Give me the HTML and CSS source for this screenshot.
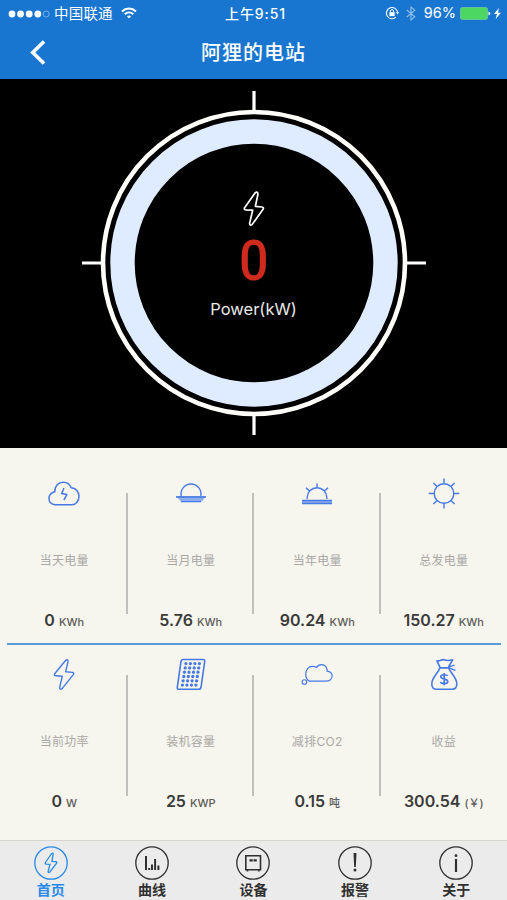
FILE: index.html
```html
<!DOCTYPE html>
<html lang="zh-CN">
<head>
<meta charset="utf-8">
<title>阿狸的电站</title>
<link rel="stylesheet" href="styles.css">
</head>
<body>
<header class="top">
  <div class="status">
    <div class="status-left">
      <svg width="42" height="10" viewBox="0 0 42 10" fill="#fff"><circle cx="4" cy="5" r="3.4"/><circle cx="12.6" cy="5" r="3.4"/><circle cx="21.2" cy="5" r="3.4"/><circle cx="29.8" cy="5" r="3.4"/><circle cx="38.2" cy="5" r="3" fill="none" stroke="#8dbcec" stroke-width=".8"/></svg>
      <span class="carrier">中国联通</span>
      <svg class="wifi" width="16" height="12" viewBox="0 0 16 12" fill="none" stroke="#fff" stroke-width="2"><path d="M1 4.4a10.2 10.2 0 0 1 14 0M3.7 7.2a6.4 6.4 0 0 1 8.6 0"/><path d="M5.9 9.3a3.2 3.2 0 0 1 4.2 0L8 11.6z" fill="#fff" stroke="none"/></svg>
    </div>
    <div class="clock">上午9:51</div>
    <div class="status-right">
      <svg width="14" height="14" viewBox="0 0 14 14" fill="none" stroke="#fff"><path d="M10.9 11.2A5.6 5.6 0 1 1 12.6 6.5" stroke-width="1.1"/><path d="M10.9 6.2h3.1l-1.5 2.2z" fill="#fff" stroke="none"/><rect x="4.4" y="6.2" width="5.2" height="3.9" fill="#fff" stroke="none"/><path d="M5.4 6.4V5.2a1.6 1.6 0 0 1 3.2 0v1.2"/></svg>
      <svg class="bt" width="10" height="15" viewBox="0 0 10 15" fill="none" stroke="#8fbdeb" stroke-width="1.1"><path d="M.8 4l8 6.8L5 14V1l3.8 3.2-8 6.8"/></svg>
      <span class="percent">96%</span>
      <svg class="battery" width="31" height="13" viewBox="0 0 31 13"><rect x=".5" y=".5" width="27" height="12" rx="1.8" fill="#4cd763" stroke="#79cf9a" stroke-width=".7"/><path d="M28.4 4.6q2 .4 2 2t-2 2z" fill="#d8eaf9"/></svg>
      <svg class="charge" width="7" height="11" viewBox="0 0 7 11" fill="#fff"><path d="M4.9 0L0 6h2.9L1.7 11 7 4.7H4z"/></svg>
    </div>
  </div>
  <div class="nav">
    <svg class="back" width="16" height="25" viewBox="0 0 16 25" fill="none" stroke="#fff" stroke-width="3.6"><path d="M14 1.5L2.8 12.5 14 23.5"/></svg>
    <h1>阿狸的电站</h1>
  </div>
</header>

<section class="gauge">
  <svg class="dial" width="346" height="346" viewBox="-173 -173 346 346" fill="none">
    <circle r="151" stroke="#fffefa" stroke-width="4.6"/>
    <circle r="131.5" stroke="#dfebfe" stroke-width="24.4"/>
    <path d="M0-172v20M0 172v-20M-172 0h20M172 0h-20" stroke="#fff" stroke-width="3.2"/>
  </svg>
  <div class="reading">
    <svg width="22" height="36" viewBox="0 0 22 36" fill="none" stroke="#fff" stroke-width="1.7" stroke-linejoin="round"><path d="M12.2 1.8L1.6 16.7Q.6 18.6 2.8 18.8L9.7 19.2 6.6 32.4Q6.6 35.2 9.1 33.6L20.2 18.1Q21 16.3 19 16L12.4 15.3 14.9 3.5Q14.9 0 12.2 1.8z"/></svg>
    <div class="power">0</div>
    <div class="power-unit">Power(kW)</div>
  </div>
</section>

<main class="stats">
  <div class="row">
    <div class="cell">
      <svg class="icon" viewBox="0 0 32 32"><path stroke-width="1.5" d="M7.2 27.7C3.4 27.2 1 24.6 1 21.4 1 18 3.5 15.7 6.8 14.8 6.8 9 10.3 5.2 15.3 5.2c3.8 0 6.6 2 7.8 5.6C28 11 31 14.8 31 19.3c0 4.7-3 8.4-7 8.4z"/><path stroke-width="1.5" d="M16 11l-2.4 5.6 5.2 1-2.9 5.6"/></svg>
      <div class="label">当天电量</div>
      <div class="value">0 <small>KWh</small></div>
    </div>
    <div class="cell">
      <svg class="icon" viewBox="0 0 32 32"><path d="M6.2 19a10 10 0 1 1 19.6 0"/><path fill="#8caeed" stroke="none" d="M1 19h30l-4 5.5H6z"/><path d="M1 20h30M6 24.6h20"/></svg>
      <div class="label">当月电量</div>
      <div class="value">5.76 <small>KWh</small></div>
    </div>
    <div class="cell">
      <svg class="icon" viewBox="0 0 32 32"><path d="M6.2 22v-1.5a9.8 9.8 0 0 1 19.6 0V22M16 11V6.5M8.5 14L5 10.7M23.5 14l3.5-3.3"/><path stroke="#8caeed" stroke-width="4" d="M1 25h30"/><path d="M1 23.5h30M1 26.5h30"/></svg>
      <div class="label">当年电量</div>
      <div class="value">90.24 <small>KWh</small></div>
    </div>
    <div class="cell">
      <svg class="icon" viewBox="0 0 32 32"><circle cx="16" cy="16.5" r="9.8"/><path d="M16 6.7v-5.2M16 31.5v-5.2M.8 16.500H6.2M25.8 16.5h5.4M9 9.5L5.4 5.9M23 9.5l3.6-3.6M9 23.5l-3.6 3.6M23 23.5l3.6 3.6"/></svg>
      <div class="label">总发电量</div>
      <div class="value">150.27 <small>KWh</small></div>
    </div>
  </div>
  <div class="divider"></div>
  <div class="row">
    <div class="cell">
      <svg class="icon" viewBox="0 0 32 32"><path d="M17.700 2.300L6.700 15.700Q5.600 17.500 7.800 17.700L14.300 18.200 11.700 29.400Q11.700 32 14.100 30.600L25.500 16.400Q26.400 14.700 24.300 14.400L17.700 13.700 20 3.700Q20.300.7 17.700 2.300z"/></svg>
      <div class="label">当前功率</div>
      <div class="value">0 <small>W</small></div>
    </div>
    <div class="cell">
      <svg class="icon" viewBox="0 0 32 32"><path stroke-width="1.6" d="M8.200 1.500H28Q30 1.500 29.700 3.500L26 29.500Q25.700 31.300 23.800 31.300H4Q2 31.300 2.300 29.300L6 3.300Q6.300 1.500 8.200 1.500z"/><path stroke-width="3.300" stroke-linecap="round" stroke-dasharray="0 4.500" d="M10.900 5.600h13.900M10.200 9.900h13.900M9.500 14.200h13.900M8.800 18.500h13.900M8.100 22.800h13.900M7.400 27.100h13.900"/></svg>
      <div class="label">装机容量</div>
      <div class="value">25 <small>KWP</small></div>
    </div>
    <div class="cell">
      <svg class="icon" viewBox="0 0 32 32"><path stroke-width="1.200" d="M8.500 23.200C6 21.800 4.700 19.200 4.700 16.200c0-4.500 2.800-7.900 6.700-7.900 1.700 0 3 .5 4 1.300C16.500 7.800 18.600 6.700 20.500 6.700c3.700 0 6 2.800 5.500 6.400 3 .4 5.100 2.200 5.100 4.700 0 3.300-2.600 5.400-6.100 5.400z"/><circle cx="3.400" cy="24" r="2.300" stroke-width="1.100"/></svg>
      <div class="label">减排CO2</div>
      <div class="value">0.15 <small>吨</small></div>
    </div>
    <div class="cell">
      <svg class="icon" viewBox="0 0 32 32"><path stroke-width="1.600" d="M12.200 9.800L9 2.800C12.500 3.500 13 1 16 1.700c3 1.300 4 1.300 8.600.1L20.500 9M12 9.800C10 15.500 4 19.500 3.800 25.500c-.1 4.200 1.600 5.700 5 5.700h15.300c3.200 0 4.800-1.600 4.700-5.700C28.600 19.500 22.500 15 20.500 9.800z"/><path d="M12 9.800h9l6.500 2.600M20.500 9.200L26.500 7.200"/><path stroke-width="1.700" d="M19.500 18c-.5-1.600-6.700-2-6.700.8 0 3 7 1.400 7 4.600 0 3-6.700 2.800-7.200.4M16.200 15v12.200"/></svg>
      <div class="label">收益</div>
      <div class="value">300.54 <small>(￥)</small></div>
    </div>
  </div>
</main>

<nav class="tabs">
  <a class="tab active"><svg viewBox="0 0 34 34"><circle cx="17" cy="17" r="16.200"/><path d="M17.700 7.500L11.400 16.500q-.7 1.400.8 1.600l3.800.3-1.900 7q.2 1.800 1.500.8L22.600 17.200q.6-1.300-.8-1.500l-3.900-.4L19.200 8q0-1.600-1.500-.5z"/></svg><span>首页</span></a>
  <a class="tab"><svg viewBox="0 0 34 34"><circle cx="17" cy="17" r="16.200"/><path stroke-width="2" d="M11 10v14M14.200 22v2M17 18.500V24M20.100 13v11M23.400 19.500V24"/></svg><span>曲线</span></a>
  <a class="tab"><svg viewBox="0 0 34 34"><circle cx="17" cy="17" r="16.200"/><path stroke-width="1.600" d="M9.800 9.800h14.700v14H9.800zM11.500 23.500v2M22.800 23.500v2"/><path stroke-width="2.200" d="M13.500 14.300h3.300M17.500 14.300h3.300"/></svg><span>设备</span></a>
  <a class="tab"><svg viewBox="0 0 34 34"><circle cx="17" cy="17" r="16.200"/><path fill="currentColor" stroke="none" d="M15.500 7h3l-.7 14h-1.600z"/><circle cx="17" cy="24" r="1.500" fill="currentColor" stroke="none"/></svg><span>报警</span></a>
  <a class="tab"><svg viewBox="0 0 34 34"><circle cx="17" cy="17" r="16.200"/><path stroke-width="2.200" d="M17 13v13"/><circle cx="17" cy="9.700" r="1.400" fill="currentColor" stroke="none"/></svg><span>关于</span></a>
</nav>
</body>
</html>
```
FILE: styles.css
```css
* { box-sizing: border-box; }
body {
  margin: 0;
  width: 507px;
  height: 900px;
  display: flex;
  flex-direction: column;
  overflow: hidden;
  background: #f6f5ee;
  font-family: Inter, "Noto Sans CJK SC", sans-serif;
}
svg { display: block; flex: none; }

.top { height: 79px; background: #1976d0; color: #fff; }
.status {
  height: 27px;
  display: grid;
  grid-template-columns: 1fr auto 1fr;
  align-items: center;
  padding: 0 6px 0 8px;
  font-size: 14px;
  line-height: 20px;
}
.status-left, .status-right { display: flex; align-items: center; }
.status-right { justify-content: flex-end; padding-bottom: 1px; }
.carrier { margin-left: 4px; font-size: 14.5px; letter-spacing: .2px; }
.wifi { margin: 0 0 2px 8px; }
.clock { padding-left: 2px; font-weight: 500; letter-spacing: .9px; }
.bt { margin-left: 7px; }
.percent { margin-left: 8px; font-size: 14.5px; }
.battery { margin-left: 4px; }
.charge { margin-left: 3px; }
.nav {
  height: 52px;
  display: grid;
  grid-template-columns: 60px 1fr 60px;
  align-items: center;
}
.back { margin: 0 0 2px 30px; }
h1 { margin: 0; text-align: center; font-size: 20px; line-height: 28px; font-weight: 500; letter-spacing: 1px; }

.gauge {
  height: 369px;
  display: grid;
  place-items: center;
  background: #000;
  color: #fff;
}
.dial, .reading { grid-area: 1 / 1; }
.dial { margin-bottom: 1px; }
.reading { display: flex; flex-direction: column; align-items: center; padding-bottom: 16px; }
.power { margin-top: 5px; font-family: Roboto, sans-serif; font-size: 56px; line-height: 58px; font-weight: 500; color: #ce2a1e; transform: scaleX(.93); }
.power-unit { margin-top: 8px; font-size: 16.5px; line-height: 22px; color: #e8e8e8; }

.stats { height: 392px; padding: 14px 0 0 1px; }
.row { height: 181px; display: grid; grid-template-columns: repeat(4, 1fr); }
.divider { height: 2px; margin: 0 6px; background: #5a9cd8; }
.cell {
  display: flex;
  flex-direction: column;
  align-items: center;
  padding-top: 15px;
  background: linear-gradient(#bfbfbb, #bfbfbb) right 31px / 2px 121px no-repeat;
}
.cell:last-child { background: none; }
.divider + .row .cell { padding-top: 13px; background-position: right 30px; }
.divider + .row .cell:last-child { background: none; }
.icon { width: 32px; height: 32px; fill: none; stroke: #4779e4; stroke-width: 1.4; stroke-linejoin: round; }
.label { margin-top: 42px; font-size: 12px; line-height: 20px; letter-spacing: .3px; color: #aaa9a5; }
.value { margin-top: 38px; line-height: 22px; font-size: 16px; font-weight: 600; color: #3b3b39; white-space: nowrap; }
.value small { font-size: 11px; font-weight: 500; color: #5c5c59; }

.tabs {
  height: 60px;
  display: grid;
  grid-template-columns: repeat(5, 1fr);
  background: #ebebeb;
  border-top: 1px solid #d6d6d0;
}
.tab { display: flex; flex-direction: column; align-items: center; padding-top: 5px; color: #303030; }
.tab svg { width: 34px; height: 34px; fill: none; stroke: currentColor; stroke-width: 1.3; }
.tab span { font-size: 14px; line-height: 20px; font-weight: 700; }
.tab.active { color: #2788e8; }
```
